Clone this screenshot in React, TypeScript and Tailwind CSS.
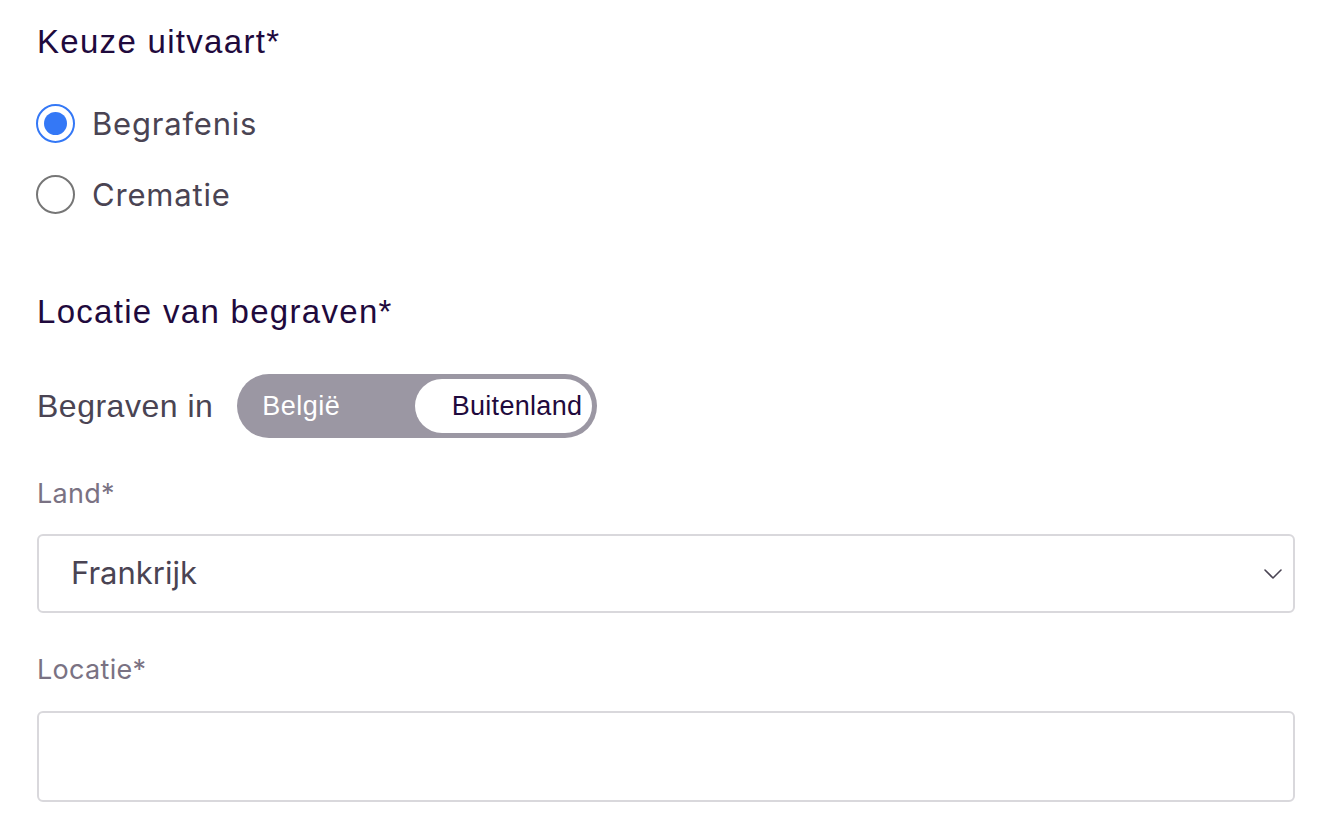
const helv = { fontFamily: '"Liberation Sans", Arial, sans-serif' };

function Radio({ label, checked }: { label: string; checked?: boolean }) {
  return (
    <label className="flex items-center h-[40px] gap-[17px]">
      {checked ? (
        <span className="w-[39px] h-[39px] rounded-full border-[2px] border-[#3478f6] flex items-center justify-center">
          <span className="w-[23px] h-[23px] rounded-full bg-[#3478f6]" />
        </span>
      ) : (
        <span className="w-[39px] h-[39px] rounded-full border-[2px] border-[#767676] bg-white" />
      )}
      <span className="text-[31px] tracking-[0.8px] text-[#4a4453] leading-none">{label}</span>
    </label>
  );
}

export default function App() {
  return (
    <div
      className="w-[1332px] h-[838px] bg-white px-[37px] pt-[23px] overflow-hidden"
      style={{ fontFamily: 'Inter, "Noto Sans", sans-serif' }}
    >
      <h2 className="text-[33px] tracking-[1.3px] leading-[38px] text-[#1f0a3d]" style={helv}>
        Keuze uitvaart*
      </h2>

      <div className="flex flex-col gap-[31px] mt-[42px] -ml-[1px]">
        <Radio label="Begrafenis" checked />
        <Radio label="Crematie" />
      </div>

      <div className="mt-[79px]">
        <h2 className="text-[33px] tracking-[1.3px] leading-[38px] text-[#1f0a3d]" style={helv}>
          Locatie van begraven*
        </h2>
      </div>

      <div className="flex items-center mt-[43px] gap-[24px]">
        <span className="text-[32px] text-[#4a4453] tracking-[0.5px]" style={helv}>
          Begraven in
        </span>
        <div
          className="flex items-center w-[360px] h-[64px] rounded-full bg-[#9b97a3] p-[5px]"
          style={helv}
        >
          <span className="flex-1 pl-[20px] text-[27px] tracking-[0.5px] text-white">België</span>
          <span className="w-[177px] h-full rounded-full bg-white flex items-center justify-end pr-[10px] text-[27px] tracking-[0.3px] text-[#1f0a3d]">
            Buitenland
          </span>
        </div>
      </div>

      <div className="mt-[41px] text-[27px] tracking-[0.3px] text-[#7a7283] leading-[30px]">Land*</div>
      <div className="mt-[25px] h-[79px] rounded-[6px] border-[2px] border-[#d9d8dc] flex items-center justify-between pl-[32px] pr-[8px]">
        <span className="text-[31px] text-[#4a4453]">Frankrijk</span>
        <svg width="20" height="12" viewBox="0 0 20 12" fill="none" className="mr-[2px]">
          <path d="M2 2 L10 10 L18 2" stroke="#4a4453" strokeWidth="1.6" strokeLinecap="round" strokeLinejoin="round" />
        </svg>
      </div>

      <div className="mt-[42px] text-[27px] tracking-[0.3px] text-[#7a7283] leading-[30px]">Locatie*</div>
      <div className="mt-[26px] h-[91px] rounded-[6px] border-[2px] border-[#d9d8dc]" />
    </div>
  );
}
